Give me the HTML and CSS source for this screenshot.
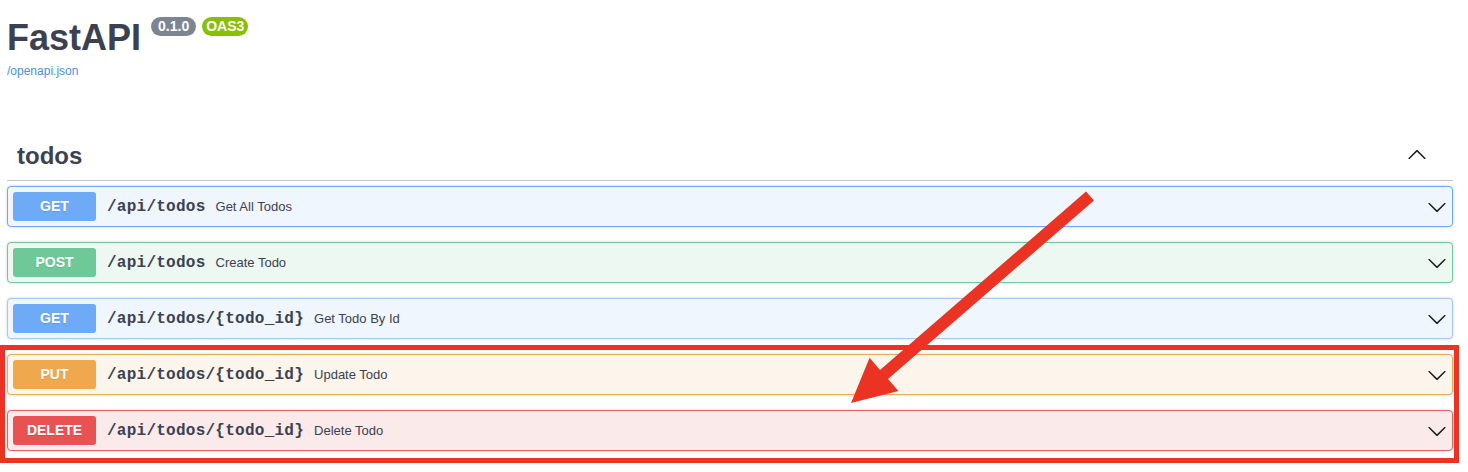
FILE: index.html
```html
<!DOCTYPE html>
<html>
<head>
<meta charset="utf-8">
<link rel="stylesheet" href="styles.css">
</head>
<body>
<div class="page">
  <div class="info">
    <div class="title-row">
      <h2 class="title">FastAPI</h2>
      <span class="stamp stamp-version">0.1.0</span>
      <span class="stamp stamp-oas">OAS3</span>
    </div>
    <a class="spec-link" href="#">/openapi.json</a>
  </div>

  <div class="tag-section">
    <div class="tag-row">
      <h3 class="tag-name">todos</h3>
      <svg class="tag-arrow" width="20" height="20" viewBox="0 0 20 20"><path d="M17.418 14.908c.272.268.709.268.979 0s.271-.701 0-.969l-7.908-7.83c-.27-.268-.707-.268-.979 0l-7.908 7.83c-.27.268-.27.701 0 .969.271.268.709.268.979 0L10 7.767l7.418 7.141z"/></svg>
    </div>

    <div class="ops">
      <div class="op op-get">
        <span class="method">GET</span>
        <span class="path">/api/todos</span>
        <span class="desc">Get All Todos</span>
        <svg class="op-arrow" width="20" height="20" viewBox="0 0 20 20"><path d="M17.418 6.109c.272-.268.709-.268.979 0s.271.701 0 .969l-7.908 7.83c-.27.268-.707.268-.979 0l-7.908-7.83c-.27-.268-.27-.701 0-.969.271-.268.709-.268.979 0L10 13.25l7.418-7.141z"/></svg>
      </div>
      <div class="op op-post">
        <span class="method">POST</span>
        <span class="path">/api/todos</span>
        <span class="desc">Create Todo</span>
        <svg class="op-arrow" width="20" height="20" viewBox="0 0 20 20"><path d="M17.418 6.109c.272-.268.709-.268.979 0s.271.701 0 .969l-7.908 7.83c-.27.268-.707.268-.979 0l-7.908-7.83c-.27-.268-.27-.701 0-.969.271-.268.709-.268.979 0L10 13.25l7.418-7.141z"/></svg>
      </div>
      <div class="op op-get op-get-light">
        <span class="method">GET</span>
        <span class="path">/api/todos/{todo_id}</span>
        <span class="desc">Get Todo By Id</span>
        <svg class="op-arrow" width="20" height="20" viewBox="0 0 20 20"><path d="M17.418 6.109c.272-.268.709-.268.979 0s.271.701 0 .969l-7.908 7.83c-.27.268-.707.268-.979 0l-7.908-7.83c-.27-.268-.27-.701 0-.969.271-.268.709-.268.979 0L10 13.25l7.418-7.141z"/></svg>
      </div>
      <div class="op op-put">
        <span class="method">PUT</span>
        <span class="path">/api/todos/{todo_id}</span>
        <span class="desc">Update Todo</span>
        <svg class="op-arrow" width="20" height="20" viewBox="0 0 20 20"><path d="M17.418 6.109c.272-.268.709-.268.979 0s.271.701 0 .969l-7.908 7.83c-.27.268-.707.268-.979 0l-7.908-7.83c-.27-.268-.27-.701 0-.969.271-.268.709-.268.979 0L10 13.25l7.418-7.141z"/></svg>
      </div>
      <div class="op op-delete">
        <span class="method">DELETE</span>
        <span class="path">/api/todos/{todo_id}</span>
        <span class="desc">Delete Todo</span>
        <svg class="op-arrow" width="20" height="20" viewBox="0 0 20 20"><path d="M17.418 6.109c.272-.268.709-.268.979 0s.271.701 0 .969l-7.908 7.83c-.27.268-.707.268-.979 0l-7.908-7.83c-.27-.268-.27-.701 0-.969.271-.268.709-.268.979 0L10 13.25l7.418-7.141z"/></svg>
      </div>
    </div>
  </div>

  <div class="highlight-box"></div>
  <svg class="annotation" width="1468" height="472" viewBox="0 0 1468 472">
    <polygon points="1086,191.5 880,370 869.6,357.8 851,403 898.4,391 888,379 1094,200.5"/>
  </svg>
</div>
</body>
</html>
```

FILE: styles.css
```css
* { box-sizing: border-box; }

html, body {
  margin: 0;
  padding: 0;
  background: #ffffff;
}

body {
  font-family: "Liberation Sans", Arial, sans-serif;
  color: #3b4151;
}

.page {
  position: relative;
  width: 1468px;
  height: 472px;
  padding: 0 15px 0 7px;
  overflow: hidden;
}

.info {
  padding-top: 17px;
}

.title-row {
  display: flex;
  align-items: flex-start;
}

.title {
  margin: 0;
  font-size: 36px;
  line-height: 41px;
  font-weight: 700;
  color: #3b4151;
}

.stamp {
  margin-top: 0;
  height: 19px;
  line-height: 19px;
  font-size: 14px;
  font-weight: 700;
  color: #ffffff;
  border-radius: 57px;
}

.stamp-version {
  margin-left: 10px;
  padding: 0 7px;
  background: #7d8492;
}

.stamp-oas {
  margin-left: 6px;
  padding: 0 4px;
  background: #89bf04;
}

.spec-link {
  display: inline-block;
  margin-top: 6px;
  font-size: 12px;
  line-height: 14px;
  color: #4990e2;
  text-decoration: none;
}

.tag-section {
  margin-top: 52px;
}

.tag-row {
  display: flex;
  align-items: center;
  justify-content: space-between;
  padding: 10px 26px 10px 10px;
  border-bottom: 1px solid rgba(59, 65, 81, 0.3);
  margin-bottom: 5px;
}

.tag-name {
  margin: 0;
  font-size: 24px;
  line-height: 29px;
  font-weight: 700;
  color: #3b4151;
}

.tag-arrow {
  fill: #1b1b1b;
  margin-bottom: 4px;
}

.ops {
  display: flex;
  flex-direction: column;
  gap: 15px;
}

.op {
  display: flex;
  align-items: center;
  height: 41px;
  padding: 0 5px;
  border: 1px solid;
  border-radius: 4px;
  box-shadow: 0 0 3px rgba(0, 0, 0, 0.19);
}

.method {
  width: 83px;
  height: 29px;
  line-height: 29px;
  text-align: center;
  font-size: 14px;
  font-weight: 700;
  color: #ffffff;
  border-radius: 3px;
  text-shadow: 0 1px 0 rgba(0, 0, 0, 0.1);
}

.path {
  padding: 0 10px 0 11px;
  font-family: "Liberation Mono", "Courier New", monospace;
  font-size: 16px;
  font-weight: 700;
  letter-spacing: 0.25px;
  color: #3b4151;
}

.desc {
  flex: 1;
  font-size: 13px;
  color: #3b4151;
}

.op-arrow {
  fill: #1b1b1b;
}

.op-get {
  background: #eff6fe;
  border-color: #6aabf8;
}
.op-get .method { background: #6eaaf6; }

.op-get-light {
  border-color: #a8c8f2;
}

.op-post {
  background: #eef8f2;
  border-color: #6ccb97;
}
.op-post .method { background: #6fc897; }

.op-put {
  background: #fcf5ec;
  border-color: #efaa55;
}
.op-put .method { background: #f0a84e; }

.op-delete {
  background: #fbeaea;
  border-color: #e56262;
}
.op-delete .method { background: #e85252; }

.highlight-box {
  position: absolute;
  left: 0;
  top: 345px;
  width: 1459px;
  height: 118px;
  border: 5px solid #ea3323;
  pointer-events: none;
}

.annotation {
  position: absolute;
  left: 0;
  top: 0;
  pointer-events: none;
}

.annotation polygon {
  fill: #ea3323;
}
```
